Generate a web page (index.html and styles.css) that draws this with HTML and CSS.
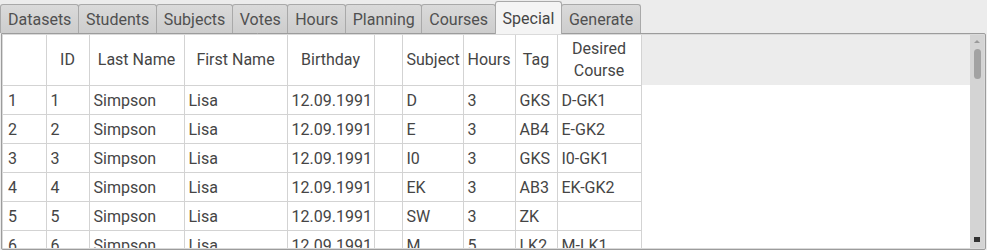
FILE: index.html
```html
<!doctype html>
<html lang="en">
<head>
    <meta charset="UTF-8">
    <title>Special</title>
    <link rel="stylesheet" href="styles.css">
</head>
<body>
<div id="tabs">
    <span class="tab">Datasets</span>
    <span class="tab">Students</span>
    <span class="tab">Subjects</span>
    <span class="tab">Votes</span>
    <span class="tab">Hours</span>
    <span class="tab">Planning</span>
    <span class="tab">Courses</span>
    <span class="tab tab-active">Special</span>
    <span class="tab">Generate</span>
</div>

<div id="panel">
    <div id="grid">
        <table>
            <colgroup>
                <col style="width: 43px">
                <col style="width: 43px">
                <col style="width: 95px">
                <col style="width: 103px">
                <col style="width: 87px">
                <col style="width: 28px">
                <col style="width: 61px">
                <col style="width: 52px">
                <col style="width: 42px">
                <col style="width: 84px">
            </colgroup>
            <thead>
            <tr>
                <th></th>
                <th>ID</th>
                <th>Last Name</th>
                <th>First Name</th>
                <th>Birthday</th>
                <th></th>
                <th>Subject</th>
                <th>Hours</th>
                <th>Tag</th>
                <th>Desired<br>Course</th>
            </tr>
            </thead>
            <tbody>
            <tr><td>1</td><td>1</td><td>Simpson</td><td>Lisa</td><td>12.09.1991</td><td></td><td>D</td><td>3</td><td>GKS</td><td>D-GK1</td></tr>
            <tr><td>2</td><td>2</td><td>Simpson</td><td>Lisa</td><td>12.09.1991</td><td></td><td>E</td><td>3</td><td>AB4</td><td>E-GK2</td></tr>
            <tr><td>3</td><td>3</td><td>Simpson</td><td>Lisa</td><td>12.09.1991</td><td></td><td>I0</td><td>3</td><td>GKS</td><td>I0-GK1</td></tr>
            <tr><td>4</td><td>4</td><td>Simpson</td><td>Lisa</td><td>12.09.1991</td><td></td><td>EK</td><td>3</td><td>AB3</td><td>EK-GK2</td></tr>
            <tr><td>5</td><td>5</td><td>Simpson</td><td>Lisa</td><td>12.09.1991</td><td></td><td>SW</td><td>3</td><td>ZK</td><td></td></tr>
            <tr><td>6</td><td>6</td><td>Simpson</td><td>Lisa</td><td>12.09.1991</td><td></td><td>M</td><td>5</td><td>LK2</td><td>M-LK1</td></tr>
            </tbody>
        </table>
    </div>

    <div id="scrollbar">
        <span class="arrow-up"></span>
        <span class="thumb"></span>
        <span class="arrow-down"></span>
    </div>
</div>
</body>
</html>
```

FILE: styles.css
```css
html, body {
    margin: 0;
    height: 100%;
    background-color: #ececec;
}

body {
    font-family: Roboto, "Liberation Sans", Arial, sans-serif;
    font-size: 16px;
    color: #454545;
    overflow: hidden;
}

#tabs {
    display: flex;
    align-items: flex-end;
    height: 33px;
    position: relative;
    z-index: 1;
}

.tab {
    height: 28px;
    line-height: 29px;
    padding: 0 6.5px 0 7px;
    margin-right: -1px;
    border: 1px solid #a9a9a9;
    border-bottom: none;
    border-radius: 3px 3px 0 0;
    background: linear-gradient(#dadada, #cdcdcd);
    color: #505050;
}

.tab-active {
    height: 32px;
    line-height: 33px;
    margin-bottom: -1px;
    background: #f4f4f4;
    color: #454545;
}

#panel {
    display: flex;
    height: 213px;
    margin: 0 1px;
    border: 1px solid #9c9c9c;
    border-radius: 0 2px 2px 2px;
    box-shadow: inset 0 0 0 1px #dadada;
    padding: 1px;
}

#grid {
    flex: 1;
    overflow: hidden;
    background: linear-gradient(#ececec 0 50px, #fff 50px);
}

table {
    border-collapse: collapse;
    table-layout: fixed;
    width: 638px;
    background-color: #fff;
}

th, td {
    border-right: 1px solid #d3d3d3;
    border-bottom: 1px solid #d3d3d3;
    padding: 0 4px;
    white-space: nowrap;
    overflow: hidden;
}

th {
    height: 50px;
    font-weight: normal;
    line-height: 22px;
    text-align: center;
}

td {
    height: 27px;
    padding-top: 1px;
}

td:first-child {
    padding-left: 5px;
}

#scrollbar {
    width: 14px;
    display: flex;
    flex-direction: column;
    align-items: center;
    background-color: #d4d4d4;
}

.arrow-up {
    margin-top: 5px;
    border-left: 3px solid transparent;
    border-right: 3px solid transparent;
    border-bottom: 3px solid #9a9a9a;
}

.thumb {
    margin-top: 6px;
    width: 7px;
    height: 30px;
    border-radius: 4px;
    background-color: #a2a2a2;
}

.arrow-down {
    margin-top: auto;
    margin-bottom: 6px;
    width: 6px;
    height: 3px;
    background-color: #333;
    border-bottom: 2px solid transparent;
}
```
